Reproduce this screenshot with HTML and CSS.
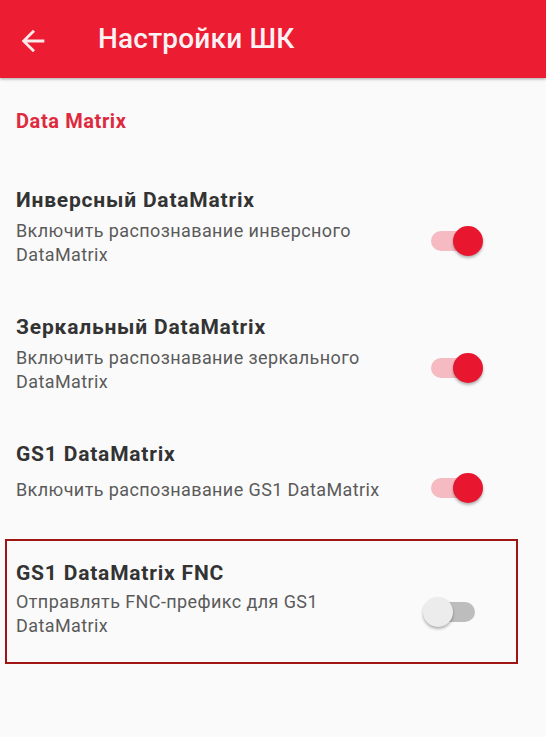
FILE: index.html
```html
<!DOCTYPE html>
<html lang="ru">
<head>
<meta charset="utf-8">
<title>Настройки ШК</title>
<link rel="stylesheet" href="styles.css">
</head>
<body>
<header class="appbar">
  <svg class="back" viewBox="0 0 24 24" aria-hidden="true"><path d="M20 11H7.83l5.59-5.59L12 4l-8 8 8 8 1.41-1.41L7.83 13H20v-2z"/></svg>
  <h1 class="appbar-title">Настройки ШК</h1>
</header>
<main class="prefs">
  <div class="category">Data Matrix</div>

  <div class="item">
    <div class="item-title">Инверсный DataMatrix</div>
    <div class="item-row">
      <div class="item-summary">Включить распознавание инверсного<br>DataMatrix</div>
      <div class="switch on"><span class="track"></span><span class="thumb"></span></div>
    </div>
  </div>

  <div class="item">
    <div class="item-title">Зеркальный DataMatrix</div>
    <div class="item-row">
      <div class="item-summary">Включить распознавание зеркального<br>DataMatrix</div>
      <div class="switch on"><span class="track"></span><span class="thumb"></span></div>
    </div>
  </div>

  <div class="item item-single">
    <div class="item-title">GS1 DataMatrix</div>
    <div class="item-row">
      <div class="item-summary">Включить распознавание GS1 DataMatrix</div>
      <div class="switch on"><span class="track"></span><span class="thumb"></span></div>
    </div>
  </div>

  <div class="item item-marked">
    <div class="item-title">GS1 DataMatrix FNC</div>
    <div class="item-row">
      <div class="item-summary">Отправлять FNC-префикс для GS1<br>DataMatrix</div>
      <div class="switch off"><span class="track"></span><span class="thumb"></span></div>
    </div>
  </div>
</main>
</body>
</html>
```
FILE: styles.css
```css
html, body {
  margin: 0;
  padding: 0;
  background: #fafafa;
  font-family: Roboto, "Noto Sans", "Liberation Sans", sans-serif;
}

.appbar {
  height: 78px;
  background: #ec1c33;
  display: flex;
  align-items: center;
  padding-left: 16px;
  box-shadow: 0 1px 3px rgba(0, 0, 0, 0.35);
  position: relative;
}

.back {
  width: 34px;
  height: 34px;
  fill: #fde8ea;
  margin-top: 4px;
}

.appbar-title {
  margin: 0 0 0 48px;
  font-size: 28px;
  font-weight: 500;
  color: #fdf2f3;
  line-height: 32px;
  letter-spacing: 0.2px;
}

.prefs {
  display: flex;
  flex-direction: column;
}

.category {
  padding: 31px 16px;
  font-size: 20px;
  line-height: 24px;
  font-weight: 700;
  letter-spacing: 0.6px;
  color: #de2a3e;
}

.item {
  padding: 24px 63px 24px 16px;
}

.item-title {
  font-size: 21px;
  line-height: 24px;
  font-weight: 700;
  letter-spacing: 0.8px;
  color: #333333;
}

.item-row {
  display: flex;
  align-items: center;
  margin-top: 7px;
}

.item-single .item-row {
  margin-top: 12px;
}

.item-summary {
  flex: 1;
  font-size: 18px;
  line-height: 24px;
  letter-spacing: 0.4px;
  color: #5a5a5a;
  white-space: nowrap;
}

.item-marked {
  margin: 13px 28px 0 5px;
  border: 2px solid #a01414;
  padding: 20px 33px 24px 9px;
}

.item-marked .item-row {
  margin-top: 5px;
}

.switch {
  position: relative;
  width: 60px;
  height: 30px;
  margin: -5px 0 -1px;
  flex: none;
}

.track {
  position: absolute;
  left: 8px;
  top: 5px;
  width: 44px;
  height: 20px;
  border-radius: 10px;
}

.thumb {
  position: absolute;
  top: 0;
  width: 30px;
  height: 30px;
  border-radius: 50%;
  box-shadow: 0 2px 3px rgba(0, 0, 0, 0.3);
}

.switch.on .track {
  background: #f5bac2;
}

.switch.on .thumb {
  right: 0;
  background: #e8172f;
}

.switch.off .track {
  background: #bdbdbd;
}

.switch.off .thumb {
  left: 0;
  background: #ececec;
}
```
